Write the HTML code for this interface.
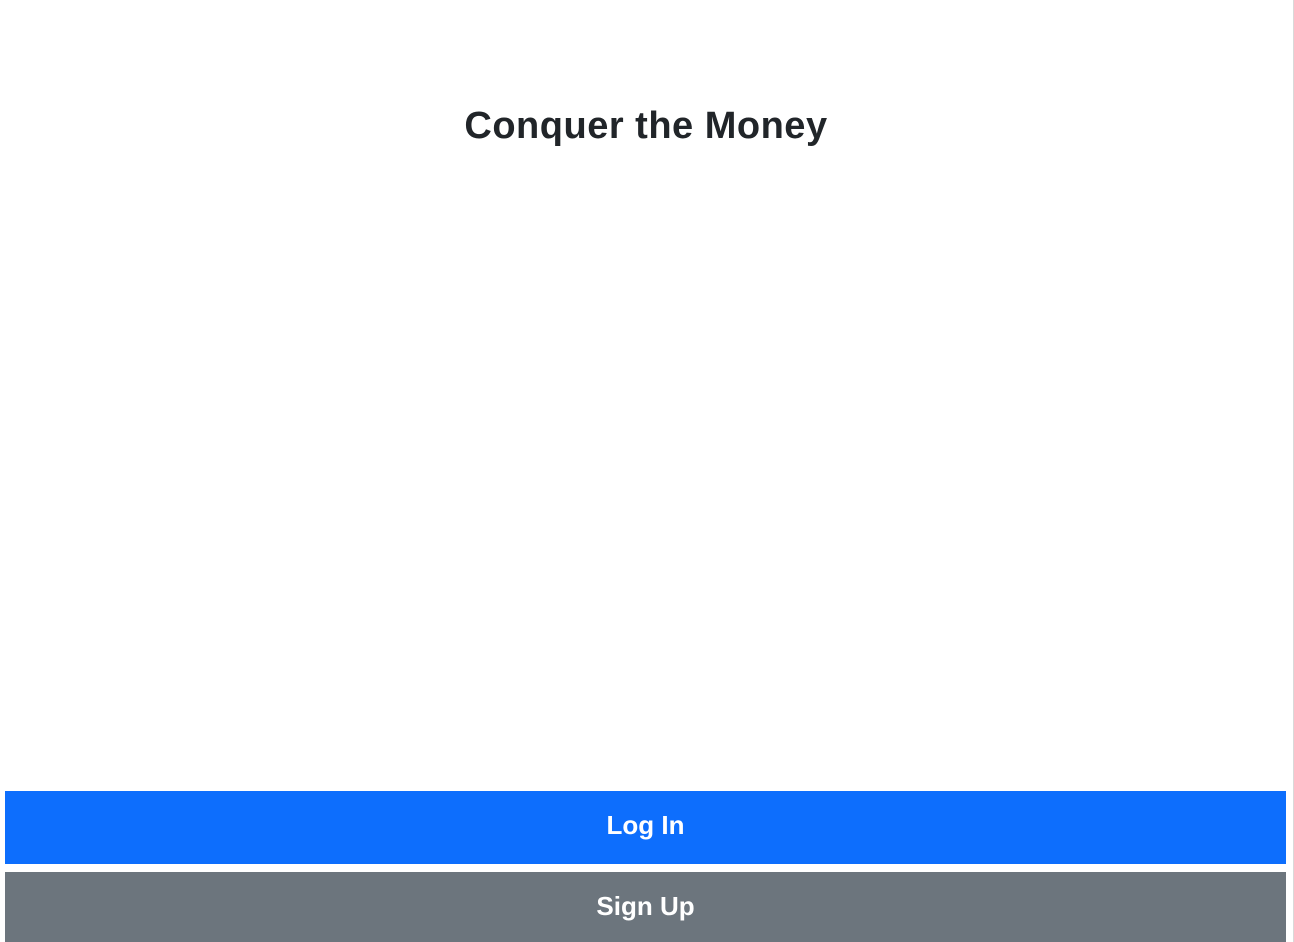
<!DOCTYPE html>
<html><head><style>
html,body{margin:0;padding:0;}
body{width:1294px;height:942px;position:relative;background:#fff;overflow:hidden;font-family:"Liberation Sans",sans-serif;}
.edge{position:absolute;left:1293px;top:0;width:1px;height:942px;background:#d9d9d9;}
h1{position:absolute;left:0;width:1292px;top:102px;margin:0;text-align:center;font-size:38px;font-weight:bold;color:#212529;line-height:48px;letter-spacing:0.5px;}
.btn{position:absolute;left:5px;width:1281px;color:#fff;font-size:26px;font-weight:bold;text-align:center;}
.b1{top:791px;height:73px;line-height:68px;background:#0d6efd;}
.b2{top:872px;height:70px;line-height:68px;background:#6c757d;}
</style></head><body>
<div class="edge"></div>
<h1>Conquer the Money</h1>
<div class="btn b1">Log In</div>
<div class="btn b2">Sign Up</div>
</body></html>
